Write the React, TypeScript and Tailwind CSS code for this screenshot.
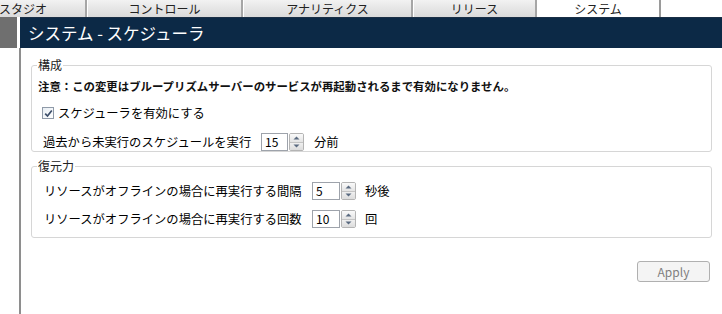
import React from "react";

const font = { fontFamily: '"Noto Sans CJK JP", "Noto Sans", sans-serif' };

function Spinner() {
  return (
    <div className="flex flex-col w-[15px] h-[18px] ml-[1px] border border-[#b4b4b4] rounded-[2px] overflow-hidden">
      <div className="flex-1 flex items-center justify-center bg-gradient-to-b from-[#fafafa] to-[#e4e4e4] border-b border-[#c4c4c4]">
        <svg width="7" height="4" viewBox="0 0 7 4"><path d="M0.5 3.5 L3.5 0.5 L6.5 3.5 Z" fill="#5a6a80" /></svg>
      </div>
      <div className="flex-1 flex items-center justify-center bg-gradient-to-b from-[#f0f0f0] to-[#dcdcdc]">
        <svg width="7" height="4" viewBox="0 0 7 4"><path d="M0.5 0.5 L3.5 3.5 L6.5 0.5 Z" fill="#5a6a80" /></svg>
      </div>
    </div>
  );
}

function NumInput({ value, w }: { value: string; w: string }) {
  return (
    <div className="flex items-center">
      <div className={`${w} h-[18px] border border-[#9ea3ab] bg-white flex items-center pl-[3px] text-[12px] leading-none text-black`}>{value}</div>
      <Spinner />
    </div>
  );
}

const tabs = [
  { label: "コントロール", w: "w-[156px]" },
  { label: "アナリティクス", w: "w-[170px]" },
  { label: "リリース", w: "w-[124px]" },
];

export default function App() {
  return (
    <div className="w-[722px] h-[314px] overflow-hidden bg-white flex flex-col" style={font}>
      {/* Tabs */}
      <div className="h-[17px] flex text-[12px] leading-none text-[#222]">
        <div className="w-[87px] h-full flex items-center bg-gradient-to-b from-[#f2f2f2] to-[#dadada] border-r-2 border-[#a6a6a6]">
          <span className="-ml-[1px]">スタジオ</span>
        </div>
        {tabs.map((t) => (
          <div key={t.label} className={`${t.w} h-full flex items-center justify-center bg-gradient-to-b from-[#f2f2f2] to-[#dadada] border-l border-white border-r-2 border-r-[#a6a6a6]`}>
            {t.label}
          </div>
        ))}
        <div className="w-[124px] h-full flex items-center justify-center bg-white border-r-2 border-[#9a9a9a]">
          システム
        </div>
        <div className="flex-1 bg-white" />
      </div>

      <div className="flex flex-1">
        {/* left strip */}
        <div className="w-[20px] flex flex-col">
          <div className="w-[17px] h-[31px] bg-[#6f6f6f]" />
          <div className="flex-1 w-[21px] border-r-2 border-[#8e8e8e]" />
        </div>

        {/* main */}
        <div className="flex-1 flex flex-col">
          <div className="h-[31px] bg-[#0c2946] border-t border-[#1a2f46] flex items-center pl-[8px] text-white text-[16.5px] leading-none">
            システム - スケジューラ
          </div>

          <div className="pl-[11px] pr-[10px] flex flex-col text-black">
            <fieldset className="mt-[9px] border border-[#d6d6d6] rounded-[3px] pb-[0px]">
              <legend className="ml-[5px] px-[1px] text-[12px] leading-[16px] text-[#222]">構成</legend>
              <div className="pl-[6px] pt-[5px] text-[11.4px] font-bold leading-[16px] text-[#111]">
                注意：この変更はブループリズムサーバーのサービスが再起動されるまで有効になりません。
              </div>
              <div className="pl-[10px] mt-[10px] flex items-center h-[18px] text-[12.3px] leading-none">
                <div className="w-[12px] h-[12px] border border-[#8f9aa8] bg-gradient-to-br from-[#e8eef4] to-[#ffffff] flex items-center justify-center">
                  <svg width="9" height="9" viewBox="0 0 9 9">
                    <path d="M1.2 4.6 L3.5 7 L7.8 1.5" stroke="#3c4e6a" strokeWidth="1.7" fill="none" />
                  </svg>
                </div>
                <span className="ml-[4px]">スケジューラを有効にする</span>
              </div>
              <div className="pl-[11px] mt-[11px] mb-[0px] flex items-center h-[18px] text-[12.3px] leading-none">
                <span className="w-[218px]">過去から未実行のスケジュールを実行</span>
                <NumInput value="15" w="w-[27px]" />
                <span className="ml-[10px]">分前</span>
              </div>
            </fieldset>

            <fieldset className="mt-[6px] border border-[#d6d6d6] rounded-[3px] pb-[9px]">
              <legend className="ml-[5px] px-[1px] text-[12px] leading-[16px] text-[#222]">復元力</legend>
              <div className="pl-[12px] mt-[8px] flex items-center h-[18px] text-[12.3px] leading-none">
                <span className="w-[268px]">リソースがオフラインの場合に再実行する間隔</span>
                <NumInput value="5" w="w-[28px]" />
                <span className="ml-[9px]">秒後</span>
              </div>
              <div className="pl-[12px] mt-[10px] flex items-center h-[18px] text-[12.3px] leading-none">
                <span className="w-[268px]">リソースがオフラインの場合に再実行する回数</span>
                <NumInput value="10" w="w-[28px]" />
                <span className="ml-[9px]">回</span>
              </div>
            </fieldset>

            <div className="flex justify-end mt-[23px] pr-[2px]">
              <button className="w-[73px] h-[21px] border border-[#b0b0b0] rounded-[3px] bg-[#f4f4f4] text-[12px] leading-none text-[#7f7f7f]">
                Apply
              </button>
            </div>
          </div>
        </div>
      </div>
    </div>
  );
}
